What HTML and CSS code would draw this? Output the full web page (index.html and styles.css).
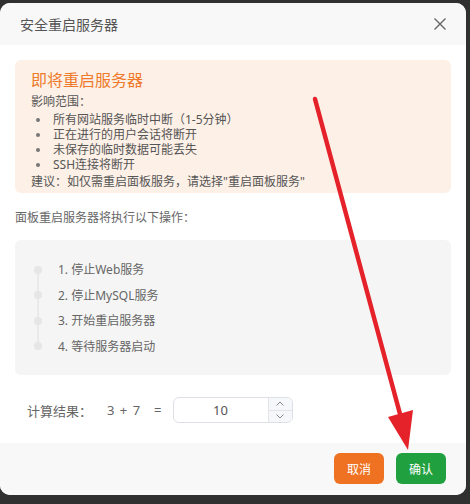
FILE: index.html
```html
<!doctype html>
<html lang="zh-CN">
<head>
    <meta charset="utf-8">
    <meta name="viewport" content="width=device-width, initial-scale=1">
    <title>安全重启服务器</title>
    <link rel="stylesheet" href="styles.css">
</head>
<body>

<!-- Диалог безопасной перезагрузки -->
<div class="dialog" role="dialog" aria-labelledby="dialog-title">
    <div class="dialog-header">
        <span class="dialog-title" id="dialog-title">安全重启服务器</span>
        <button type="button" class="dialog-close" aria-label="关闭">
            <svg width="12" height="12" viewBox="0 0 12 12"><path d="M0.5 0.5 11.5 11.5M11.5 0.5 0.5 11.5" stroke="#666" stroke-width="1.4" fill="none"/></svg>
        </button>
    </div>

    <div class="dialog-body">
        <!-- Предупреждение -->
        <div class="notice">
            <h3 class="notice-title">即将重启服务器</h3>
            <p class="notice-text">影响范围：</p>
            <ul class="notice-list">
                <li>所有网站服务临时中断（1-5分钟）</li>
                <li>正在进行的用户会话将断开</li>
                <li>未保存的临时数据可能丢失</li>
                <li>SSH连接将断开</li>
            </ul>
            <p class="notice-text">建议：如仅需重启面板服务，请选择"重启面板服务"</p>
        </div>

        <p class="steps-intro">面板重启服务器将执行以下操作：</p>

        <!-- Шаги перезагрузки -->
        <ol class="steps">
            <li>1. 停止Web服务</li>
            <li>2. 停止MySQL服务</li>
            <li>3. 开始重启服务器</li>
            <li>4. 等待服务器启动</li>
        </ol>

        <!-- Проверка -->
        <div class="calc">
            <span class="calc-label">计算结果：</span>
            <span class="calc-expr">3 + 7</span>
            <span class="calc-eq">=</span>
            <div class="number-input">
                <span class="number-value">10</span>
                <span class="number-spin">
                    <span class="spin-btn"><svg width="8" height="5" viewBox="0 0 8 5"><path d="M0.5 4.5 4 1 7.5 4.5" stroke="#888" fill="none"/></svg></span>
                    <span class="spin-btn"><svg width="8" height="5" viewBox="0 0 8 5"><path d="M0.5 0.5 4 4 7.5 0.5" stroke="#888" fill="none"/></svg></span>
                </span>
            </div>
        </div>
    </div>

    <div class="dialog-footer">
        <button type="button" class="btn btn-cancel">取消</button>
        <button type="button" class="btn btn-confirm">确认</button>
    </div>
</div>

<!-- Красная стрелка-пометка поверх скриншота -->
<svg class="annotation" width="470" height="504" viewBox="0 0 470 504" aria-hidden="true">
    <path d="M315 99 L400 414" stroke="#e5222a" stroke-width="4.5" stroke-linecap="round" fill="none"/>
    <path d="M388 417 L413 410 L408 450 Z" fill="#e5222a"/>
</svg>

</body>
</html>
```

FILE: styles.css
```css
*, *::before, *::after {
    box-sizing: border-box;
}

:root {
    --dlg-bg: #fff;
    --dlg-bar-bg: #f8f8f8;
    --dlg-text: #666;
    --dlg-orange: #ef7a2b;
    --dlg-green: #20a03f;
    --dlg-radius: 10px;
}

body {
    margin: 0;
    min-height: 504px;
    background-color: #303030;
    font-family: "Noto Sans", "Noto Sans CJK SC", sans-serif;
    color: var(--dlg-text);
    position: relative;
}

/* Окно */
.dialog {
    width: 466px;
    margin-top: 3px;
    background: var(--dlg-bg);
    border-radius: var(--dlg-radius);
    overflow: hidden;
}

.dialog-header {
    height: 42px;
    padding: 0 20px;
    display: flex;
    align-items: center;
    justify-content: space-between;
    background: var(--dlg-bar-bg);
}

.dialog-title {
    font-size: 14px;
    color: #555;
}

.dialog-close {
    display: flex;
    padding: 0;
    border: 0;
    background: none;
    cursor: pointer;
}

.dialog-body {
    padding: 15px 15px 20px;
}

/* Предупреждение */
.notice {
    padding: 8px 16px 1px;
    background: #fdf0e7;
    border-radius: 6px;
    color: #555;
}

.notice-title {
    margin: 0;
    font-size: 16px;
    font-weight: normal;
    line-height: 24px;
    color: var(--dlg-orange);
}

.notice-text {
    margin: 0;
    font-size: 12px;
    line-height: 20px;
}

.notice-list {
    margin: 0;
    padding: 0;
    list-style: none;
    font-size: 12px;
    line-height: 15px;
}

.notice-list li {
    display: flex;
    align-items: center;
}

.notice-list li::before {
    content: "";
    width: 4px;
    height: 4px;
    margin: 0 13px 0 5px;
    border-radius: 50%;
    background: #777;
}

.steps-intro {
    margin: 15px 0 12px;
    font-size: 12px;
    line-height: 20px;
}

/* Шаги */
.steps {
    margin: 0;
    padding: 17px 16px 16px;
    list-style: none;
    border-radius: 6px;
    background: linear-gradient(#eaeaea, #eaeaea) 22px 28px / 2px 79px no-repeat, #f5f5f5;
    font-size: 12px;
    line-height: 25.5px;
}

.steps li {
    display: flex;
    align-items: center;
}

.steps li::before {
    content: "";
    width: 8px;
    height: 8px;
    margin: 0 16px 0 3px;
    border-radius: 50%;
    background: #e6e6e6;
}

/* Проверка */
.calc {
    display: flex;
    align-items: center;
    margin-top: 22px;
    padding-left: 12px;
    font-size: 13px;
}

.calc-expr {
    margin-left: 15px;
    letter-spacing: 1px;
}

.calc-eq {
    margin-left: 13px;
}

.number-input {
    display: flex;
    width: 120px;
    height: 26px;
    margin-left: 11px;
    border: 1px solid #dcdfe6;
    border-radius: 6px;
    overflow: hidden;
}

.number-value {
    flex: 1;
    text-align: center;
    line-height: 24px;
    font-size: 13px;
    color: #555;
}

.number-spin {
    display: flex;
    flex-direction: column;
    width: 24px;
    border-left: 1px solid #e4e4e4;
    background: #f5f7fa;
}

.spin-btn {
    flex: 1;
    display: flex;
    align-items: center;
    justify-content: center;
}

.spin-btn + .spin-btn {
    border-top: 1px solid #e4e4e4;
}

/* Кнопки */
.dialog-footer {
    height: 52px;
    padding: 10px 20px 0;
    display: flex;
    justify-content: flex-end;
    gap: 12px;
    background: var(--dlg-bar-bg);
}

.btn {
    width: 50px;
    height: 31px;
    padding: 0;
    border: 0;
    border-radius: 6px;
    color: #fff;
    font-family: inherit;
    font-size: 12px;
    cursor: pointer;
}

.btn-cancel {
    background: #ef7222;
}

.btn-confirm {
    background: var(--dlg-green);
}

/* Пометка */
.annotation {
    position: absolute;
    top: 0;
    left: 0;
    pointer-events: none;
}
```
